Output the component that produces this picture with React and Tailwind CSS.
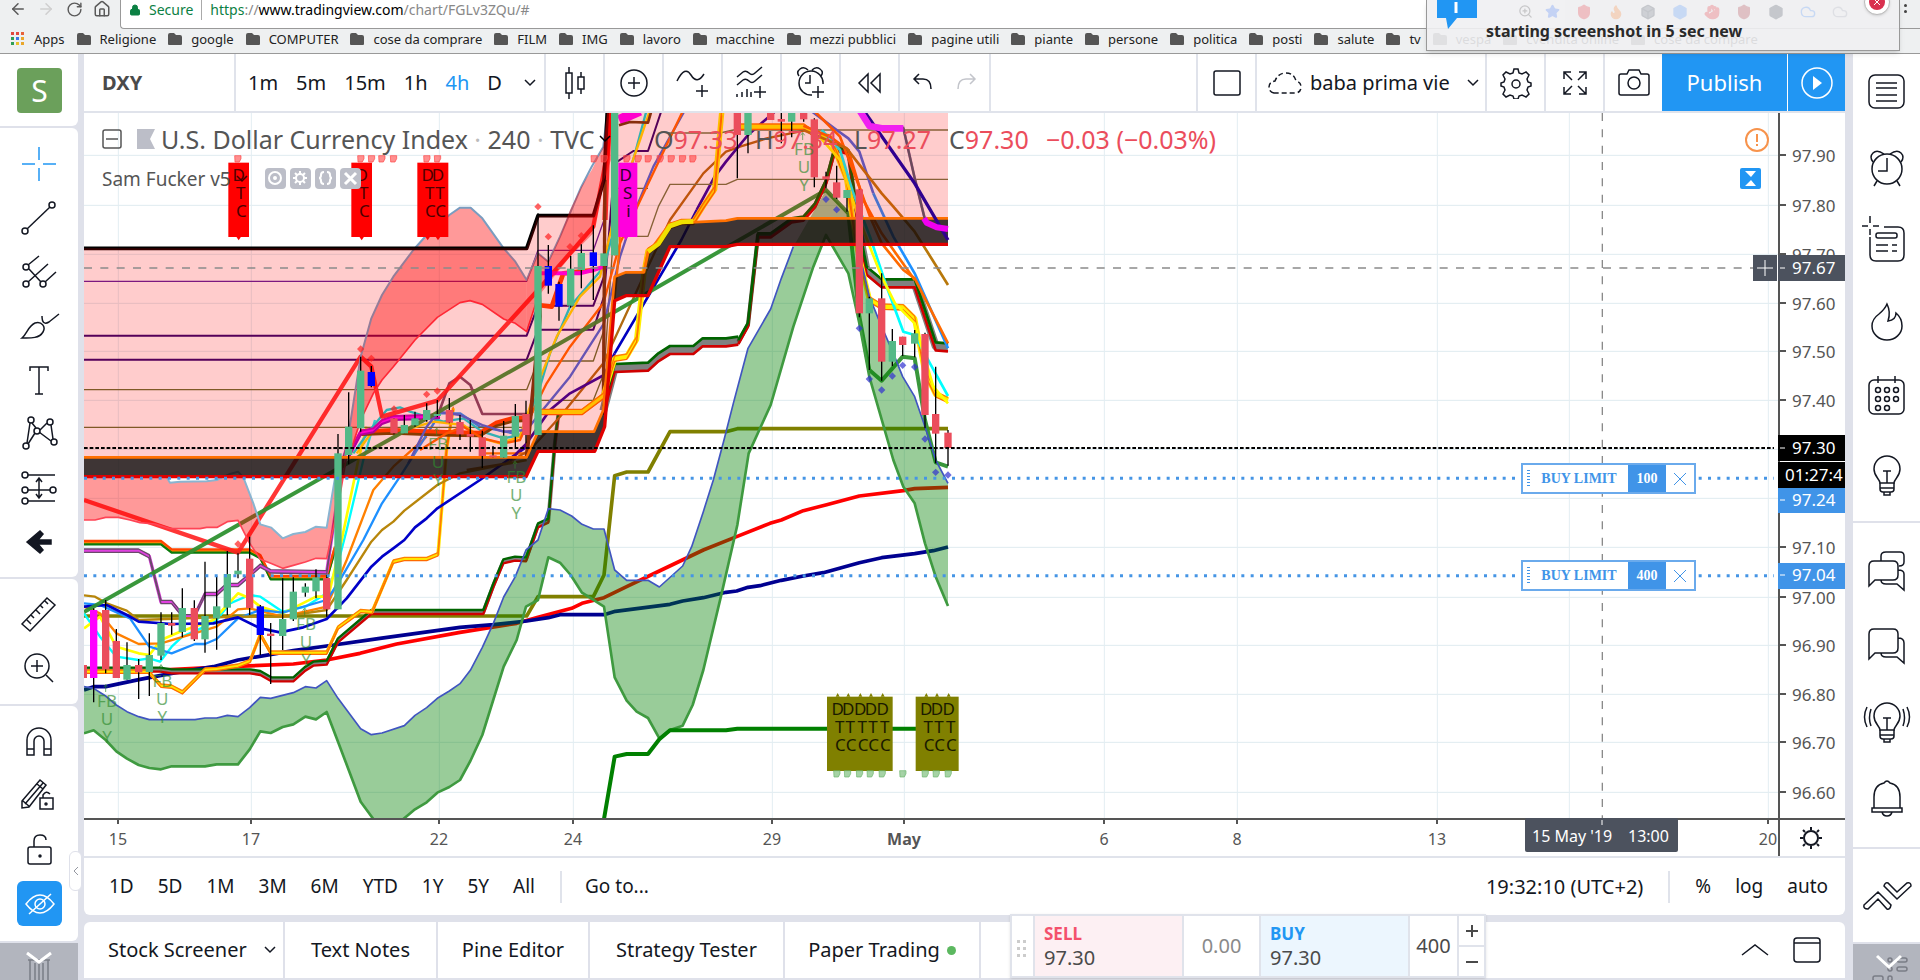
import React from "react";
import { ArrowLeft, ArrowRight, RotateCw, House, Lock, Star, ZoomIn, Flame, Shield, Box, Hand, Cloud } from "lucide-react";

const BOOKMARKS = [
  "Religione", "google", "COMPUTER", "cose da comprare", "FILM", "IMG", "lavoro", "macchine",
  "mezzi pubblici", "pagine utili", "piante", "persone", "politica", "posti", "salute", "tv",
  "vespa", "cvendita online", "cose da compare",
];

/* ---------- chart data, three units to the pixel ---------- */

const RED = "#eb4d5c";
const GREEN = "#53b987";
const BLUE = "#0000ff";

// [x, high, top, bottom, low, colour]
const CANDLES_LOW = [
  [10, 675, 675, 714, 714, RED], [41, 505, 510, 714, 787, "#ff00ff"], [77, 480, 510, 688, 700, RED],
  [109, 567, 603, 714, 714, RED], [141, 607, 675, 719, 719, GREEN], [176, 657, 675, 697, 777, RED],
  [208, 580, 645, 696, 768, GREEN], [243, 517, 549, 647, 660, GREEN], [275, 517, 549, 557, 584, RED],
  [307, 445, 504, 576, 592, GREEN], [343, 481, 504, 598, 603, RED], [375, 365, 528, 598, 638, GREEN],
  [410, 408, 499, 535, 629, GREEN], [442, 333, 402, 503, 525, GREEN], [474, 340, 392, 403, 415, GREEN],
  [509, 290, 356, 504, 525, RED], [541, 495, 499, 585, 645, BLUE], [572, 549, 581, 588, 732, RED],
  [608, 415, 537, 588, 630, GREEN], [640, 412, 455, 538, 543, GREEN], [676, 430, 440, 458, 470, GREEN],
  [708, 388, 412, 454, 475, GREEN], [740, 405, 414, 508, 530, RED], [774, -18, 40, 508, 508, GREEN],
];
const CANDLES_MID = [
  [806, 847, 950, 1035, 1063, GREEN], [842, 740, 782, 955, 965, GREEN], [874, 768, 786, 828, 832, BLUE],
  [942, 925, 925, 970, 973, RED], [973, 915, 945, 970, 970, GREEN], [1005, 905, 925, 946, 950, GREEN],
  [1040, 880, 900, 930, 935, GREEN], [1072, 870, 912, 918, 922, GREEN], [1108, 864, 900, 938, 940, RED],
  [1140, 915, 936, 973, 990, RED], [1171, 930, 972, 980, 1025, RED], [1207, 962, 982, 1038, 1074, RED],
  [1239, 1008, 1036, 1042, 1042, RED], [1271, 933, 977, 1043, 1043, GREEN], [1306, 882, 918, 980, 1012, GREEN],
  [1338, 872, 912, 975, 1000, RED], [1374, 310, 468, 975, 975, GREEN], [1405, 405, 468, 527, 551, BLUE],
];
const CANDLES_HIGH = [
  [117, 515, 522, 590, 632, BLUE], [152, 438, 476, 587, 593, GREEN], [184, 403, 429, 480, 535, GREEN],
  [220, 346, 427, 468, 570, BLUE], [252, 430, 430, 468, 468, GREEN], [284, 0, 0, 436, 436, GREEN],
  [652, 0, 0, 75, 205, RED], [684, 0, 0, 75, 130, GREEN], [752, 0, 0, 30, 30, RED], [784, 5, 27, 35, 100, RED],
  [815, 0, 0, 35, 82, GREEN], [851, 0, 0, 28, 35, RED], [883, 25, 28, 202, 232, RED], [918, 185, 199, 208, 235, RED],
  [950, 167, 217, 263, 267, RED], [981, 240, 240, 264, 305, GREEN], [1018, 238, 238, 610, 622, RED],
  [1048, 560, 565, 610, 780, GREEN], [1085, 490, 565, 755, 812, RED], [1117, 657, 693, 755, 768, GREEN],
  [1148, 680, 680, 705, 738, RED], [1184, 660, 670, 701, 742, GREEN], [1215, 668, 672, 915, 955, RED],
  [1247, 770, 912, 971, 1060, RED], [1284, 960, 968, 1014, 1067, RED],
];

const GRID_Y = [155, 205, 254, 303, 351, 400, 449, 498, 547, 597, 645, 694, 742, 792];
const GRID_X = [118, 251, 439, 573, 772, 904, 1104, 1237, 1437, 1569, 1768];

const PRICES = [
  [155, "97.90"], [205, "97.80"], [254, "97.70"], [303, "97.60"], [351, "97.50"], [400, "97.40"],
  [547, "97.10"], [597, "97.00"], [645, "96.90"], [694, "96.80"], [742, "96.70"], [792, "96.60"],
];
const DATES = [
  [118, "15"], [251, "17"], [439, "22"], [573, "24"], [772, "29"], [904, "May"],
  [1104, "6"], [1237, "8"], [1437, "13"], [1768, "20"],
];

// frames the series are plotted in
const LOW = "translate(-12 981)";
const MID = "translate(-12 -9)";
const HIGH = "translate(1308 -9)";
const DEEP = "translate(1308 981)";

function Line({ p, c, w = 7, o = 1 }) {
  return <polyline points={p} fill="none" stroke={c} strokeWidth={w} opacity={o} strokeLinejoin="round" />;
}

function Ribbon({ p, top, mid, low, gap = 10, w = 6 }) {
  return (
    <g>
      <g transform={`translate(0 ${gap / 2})`}><Line p={p} c={mid} w={gap} /></g>
      <g transform={`translate(0 ${gap})`}><Line p={p} c={low} w={w} /></g>
      <Line p={p} c={top} w={w} />
    </g>
  );
}

function Candles({ data }) {
  return data.map(([x, high, top, bottom, low, c]) => (
    <g key={x}>
      <line x1={x} x2={x} y1={high} y2={low} stroke="#000" strokeWidth="4" />
      <rect x={x - 11} y={top} width="22" height={bottom - top} fill={c} />
    </g>
  ));
}

function Diamonds({ at, c }) {
  return at.map(([x, y]) => (
    <path key={`${x}-${y}`} d={`M${x} ${y - 11}l11 11l-11 11l-11 -11z`} fill={c} opacity=".7" />
  ));
}

function Thumbs({ xs, y, c }) {
  return xs.map((x) => (
    <path key={x} d={`M${x - 9} ${y - 9}h19v9l-5 10h-13z`} fill={c} fillOpacity=".6" stroke={c} strokeWidth="2" />
  ));
}

function Tag({ x, w, fill, ink, cols, rows, up }) {
  const y0 = up ? 770 : 158;
  return (
    <g>
      <rect x={x} y={y0} width={w} height="223" fill={fill} />
      {cols.map((cx) => (
        <path key={cx} d={up ? `M${cx - 6} ${y0}l6 -11l6 11z` : `M${cx - 7} ${y0 + 222}l7 11l7 -11z`} fill={fill} />
      ))}
      {cols.map((cx) => rows.map((ch, i) => (
        <text key={`${cx}-${i}`} x={cx + [0, 6, 8][i]} y={y0 + 54 + i * 54} fill={ink} fontSize="51" textAnchor="middle">{ch}</text>
      )))}
    </g>
  );
}

function Fbuy({ x, y }) {
  return (
    <g fill="#2e8b2e" opacity=".65" fontSize="51" textAnchor="middle">
      <path d={`M${x - 4} ${y - 44}v-22m-6 8l6 -8l6 8`} fill="none" stroke="#2e8b2e" strokeWidth="3" />
      <text x={x} y={y}>FB</text>
      <text x={x} y={y + 54}>U</text>
      <text x={x} y={y + 108}>Y</text>
    </g>
  );
}

const KUMO_TOP = "-1308,1042 20,1042 54,965 222,965 250,900 284,500 318,487 372,487 384,430 450,340 618,332 652,325 1284,325";
const KUMO_LOW = "-1308,1100 18,1100 54,1024 224,1024 254,950 284,572 318,557 384,557 450,410 618,410 652,403 1284,403";
const KUMO_LOW_BACK = "1284,403 652,403 618,410 450,410 384,557 318,557 284,572 254,950 224,1024 54,1024 18,1100 -1308,1100";

function Plot() {
  return (
    <svg className="block h-full w-full" viewBox="0 0 5082 2118" preserveAspectRatio="xMinYMin slice" fontFamily="Noto Sans, sans-serif">
      {GRID_Y.map((y) => <path key={y} d={`M0 ${(y - 113) * 3 + 1}H5082`} stroke="#dfebf0" strokeWidth="3" />)}
      {GRID_X.map((x) => <path key={x} d={`M${(x - 84) * 3 + 1} 0V2118`} stroke="#e3edf2" strokeWidth="3" />)}

      {/* moving averages and channels */}
      <g transform={LOW}>
        <Line c="#808000" w={11} p="12,528 1340,528 1374,470 1540,470 1572,405 1604,107 1640,96 1704,96 1770,-25 1938,-25 1972,-34 2604,-34" />
        <Line c="#ff0000" w={11} p="12,693 240,690 450,680 640,672 740,660 840,640 950,612 1140,577 1310,550 1374,532 1475,505 1506,490 1572,473 1640,440 1738,393 1870,330 1970,290 2070,250 2104,240 2170,212 2240,194 2338,168 2470,152 2504,146 2604,142" />
        <Line c="#000090" w={11} p="12,750 41,740 77,740 180,718 275,700 400,680 474,660 640,632 740,618 900,595 1140,562 1240,554 1340,543 1405,533 1440,524 1572,524 1606,514 1770,493 1808,483 1870,473 1938,457 1970,453 2004,442 2040,437 2104,421 2170,408 2230,398 2338,368 2405,353 2504,341 2560,332 2604,321" />
        <Ribbon top="#ff4500" mid="#ff8c00" low="#0a7a0a" gap={10} w={7} p="12,303 243,303 275,328 509,328 541,345 572,408 740,408 765,320" />
        <Ribbon top="#6b4a6b" mid="#e040e0" low="#6b4a6b" gap={10} w={4} p="12,327 176,327 208,344 243,481 275,481 310,524 343,524 375,457 410,457 440,430 474,430 509,400 541,372 572,389 740,392 790,50 806,0" />
        <Ribbon top="#006400" mid="#808080" low="#d00000" gap={12} w={7} p="12,683 240,683 275,688 510,688 541,693 574,712 640,712 676,680 700,665 740,662 774,595 874,510 1210,510 1240,430 1270,358 1305,350 1338,352 1374,250 1405,236 1425,0 1436,-90" />
        <Ribbon top="#ff8000" mid="#ffe600" low="#ff6a00" gap={10} w={4} p="12,690 205,690 243,732 275,735 307,752 375,684 410,682 474,672 510,658 541,578 572,633 740,633 774,558 842,508 876,511 906,440 940,360 973,352 1040,352 1074,338 1100,20 1120,-100" />
        <Line c="#00ffff" p="12,520 60,590 109,650 176,660 208,655 240,665 275,620 307,590 375,560 410,540 450,490 509,465 541,470 608,515 676,500 708,480 740,460 774,370 800,270 850,60 885,-60" />
        <Line c="#ffff00" w={8} p="12,565 60,530 109,620 176,640 208,645 243,600 300,575 400,540 474,460 509,475 541,500 608,520 708,470 745,470 785,300 835,60 860,-40" />
        <Line c="#ff8000" p="12,500 60,520 109,580 176,612 243,610 343,580 410,560 474,508 509,505 608,530 740,500 800,360 880,150 940,80 1040,-10" />
        <Line c="#1e90ff" p="12,490 60,495 150,535 208,620 275,640 345,612 375,612 410,597 474,535 541,510 608,518 740,480 774,430 850,300 906,190 960,110 1030,0 1080,-80 1140,-80 1200,-40 1300,-20" />
        <Line c="#b8860b" p="12,466 45,470 80,490 140,512 176,540 474,530 608,530 740,510 800,420 874,305 906,270 940,245 973,212 1072,135 1140,100 1340,60" />
        <Line c="#0000c8" w={8} p="12,500 80,495 141,525 176,545 275,552 400,550 474,532 541,565 600,577 670,562 740,537 800,475 874,380 906,350 940,325 973,300 1005,262 1040,235 1072,205 1200,120 1340,20" />
      </g>

      <g transform={MID}>
        <Line c="#5a1fa0" w={4} p="12,514 1340,514 1374,421 1540,421 1572,330" />
        <Line c="#2a0070" w={6} p="12,677 1340,677 1374,587 1540,587 1572,500" />
        <Line c="#2a0070" w={6} p="12,749 1340,749 1374,659 1540,659 1572,560 1604,160 1660,123 1704,123 1745,0" />
        <Line c="#5f7030" w={4} p="12,839 1340,839 1374,753 1540,753 1572,660" />
        <Line c="#5f7030" w={4} p="12,952 1340,952 1374,871 1540,871 1572,790 1610,235 1704,235" />
        <Line c="#00dde0" p="820,1030 870,960 920,900 960,892 990,905 1040,920 1090,935 1150,925 1207,965 1271,985 1320,975 1374,850 1410,730 1470,590 1572,470 1620,290 1665,130 1700,0" />
        <Line c="#ffe000" p="830,1030 880,960 960,965 1060,935 1150,945 1207,985 1260,1000 1320,980 1370,830 1430,680 1500,560 1560,500 1610,290 1680,90 1710,0" />
        <Ribbon top="#ff4500" mid="#ff4500" low="#6b4a00" gap={12} w={8} p="842,962 940,958 1100,964 1200,966 1250,935 1300,922 1340,920" />
        <Ribbon top="#c000c0" mid="#ff00ff" low="#a000c0" gap={12} w={6} p="806,1030 842,962 880,955 906,930 940,918 1040,915 1080,912" />
        <Line c="#7a4a6b" w={8} p="1075,912 1108,820 1140,800 1171,825 1207,912 1340,912" />
        <Line c="#4169e1" p="985,1060 1040,950 1075,905 1140,915 1207,945 1271,965 1340,960 1380,910 1470,800 1572,640 1620,440 1670,290 1720,170 1815,0" />
        <Line c="#ff6a00" p="1020,1020 1100,970 1150,950 1207,985 1271,1000 1320,990 1360,900 1400,820 1470,710 1570,580 1620,400 1700,230 1810,0" />
        <Line c="#ff8000" p="1207,1030 1340,1030" />
        <Line c="#b06a10" p="1160,1080 1280,1060 1350,1020 1440,920 1570,760 1690,500 1770,330 1870,190 1938,125 1980,110 2060,85 2172,62" />
        <Line c="#2a00a0" w={8} p="1290,1050 1340,1000 1410,900 1470,850 1572,795 1604,730" />
        <Line c="#0000c0" w={8} p="1604,730 1804,390 1850,300" />
        <Line c="#2a00a0" w={8} p="1850,300 1904,200 1938,155 2004,75 2090,0" />
        <Line c="#ff2020" w={13} o={0.9} p="12,1170 474,1328 842,740 874,770 906,920 1072,872 1374,540 1540,350 1582,130 1592,0" />
        <Line c="#2e9130" w={12} o={0.95} p="12,1506 1440,700 2238,240 2305,310 2338,620 2368,780 2405,812 2468,740 2504,745 2535,930 2567,1057 2604,1070" />
      </g>

      <g transform={HIGH}>
        <Line c="#ff0000" w={16} p="255,330 262,130 270,0" o={0.8} />
        <Line c="#ff4500" w={14} p="54,585 95,590 130,490 220,480" />
        <Line c="#ff00ff" w={12} p="54,490 180,490 220,480 252,470" />
        <Line c="#ff00ff" w={30} p="297,30 360,2" />
        <Line c="#6b3a10" w={8} p="297,46 330,36 384,38 395,0" />
        <Line c="#6b3a10" w={12} p="20,1042 60,620 54,480" />
        <Line c="#6b3a10" w={10} p="250,900 255,210" />
        <Line c="#ff8000" p="254,900 284,560 300,400 290,200" />
        <Line c="#6b7a45" w={4} p="350,379 384,379 415,290 450,223 618,223 652,208 1284,208" />
        <Line c="#6b7a45" w={4} p="440,69 600,69 640,60 1284,60" />
        <Ribbon top="#006400" mid="#808080" low="#d00000" gap={24} w={8} p="250,890 284,762 384,758 415,730 450,708 520,708 548,685 618,685 655,680" />
        <Ribbon top="#006400" mid="#4a4a30" low="#d00000" gap={12} w={8} p="655,690 684,638 714,370 752,370 815,325 850,320 885,280 918,210 945,110 985,120 1018,360" />
        <Ribbon top="#006400" mid="#808080" low="#d00000" gap={24} w={8} p="1018,360 1040,470 1085,508 1184,508 1215,600 1247,697 1284,700" />
        <Ribbon top="#ff8000" mid="#ffee00" low="#ff6a00" gap={16} w={4} p="60,898 186,898 250,850 284,738 320,732 350,680 372,480 384,415 415,395 450,340 484,328 520,328 550,280 584,230 605,0" />
        <Ribbon top="#ff8000" mid="#ffee00" low="#ff6a00" gap={16} w={4} p="660,42 852,42 885,66 930,75 980,200 1010,400 1048,560 1085,582 1150,584 1184,618 1215,780 1247,845 1284,862" />
        <Line c="#00ffff" w={8} p="905,60 960,120 1000,250 1050,380 1100,530 1150,665 1184,675 1230,760 1284,858" />
        <Line c="#ffff00" w={8} p="890,70 960,150 1018,330 1085,500 1125,580 1184,640 1240,830 1284,880" />
        <Line c="#4169e1" w={8} p="870,0 950,60 985,85 1018,125 1060,250" />
        <Line c="#1e90ff" w={8} p="1060,250 1120,380 1184,490 1284,715" />
        <Line c="#ff6a00" w={8} p="880,0 960,80 1018,230 1050,320 1085,400 1150,480 1184,505 1284,700" />
        <Line c="#ff6a00" w={8} p="850,47 930,80 985,120 1030,270 1085,370 1184,510" />
        <Line c="#b8780b" w={8} p="850,60 980,115 1085,250 1120,290 1184,365 1250,470 1284,525" />
      </g>

      {/* clouds lie over the lines */}
      <g transform={LOW} fill="#008000">
        <polygon fillOpacity=".4" points="12,740 41,745 77,768 109,795 141,815 176,830 208,839 345,839 375,834 410,834 442,826 474,830 509,803 541,772 572,775 640,758 676,740 708,744 740,722 774,775 842,866 874,884 906,879 973,857 1005,826 1040,803 1072,775 1108,753 1140,731 1171,691 1207,622 1240,550 1271,471 1306,410 1338,330 1374,300 1405,206 1440,210 1475,228 1506,253 1540,267 1572,267 1604,390 1640,421 1704,421 1738,441 1808,378 1835,320 1870,215 1900,120 1932,0 1960,-110 2004,-275 2072,-393 2104,-485 2140,-580 2238,-750 2305,-680 2338,-560 2368,-430 2405,-340 2440,-260 2468,-190 2504,-130 2535,-40 2567,60 2604,130 2604,498 2567,410 2535,310 2504,190 2470,140 2440,60 2368,-190 2338,-350 2305,-500 2238,-615 2200,-520 2140,-340 2072,-105 2006,40 1972,255 1925,460 1870,690 1838,795 1808,857 1770,870 1738,895 1704,834 1670,815 1640,782 1604,712 1572,500 1506,458 1472,405 1440,368 1405,352 1374,480 1338,500 1310,600 1271,680 1207,885 1171,963 1140,1020 1108,1041 1072,1058 1040,1087 1005,1108 970,1137 880,1137 842,1085 774,905 740,816 708,838 676,830 640,853 608,861 572,879 541,874 509,928 474,973 410,973 375,979 275,979 243,988 208,984 176,975 141,956 109,934 77,900 41,871 12,880" />
        <Line c="#4055c0" w={5} p="12,740 41,745 77,768 109,795 141,815 176,830 208,839 345,839 375,834 410,834 442,826 474,830 509,803 541,772 572,775 640,758 676,740 708,744 740,722 774,775 842,866 874,884 906,879 973,857 1005,826 1040,803 1072,775 1108,753 1140,731 1171,691 1207,622 1240,550 1271,471 1306,410 1338,330 1374,300 1405,206 1440,210 1475,228 1506,253 1540,267 1572,267 1604,390 1640,421 1704,421 1738,441 1808,378 1835,320 1870,215 1900,120 1932,0 1960,-110 2004,-275 2072,-393 2104,-485 2140,-580" />
        <Line c="#4055c0" w={5} p="2338,-560 2368,-430 2405,-340 2440,-260 2468,-190 2504,-130 2535,-40 2567,60 2604,130" />
        <Line c="#3f9a40" w={8} p="12,880 41,871 77,900 109,934 141,956 176,975 208,984 243,988 275,979 375,979 410,973 474,973 509,928 541,874 572,879 608,861 640,853 676,830 708,838 740,816 774,905 842,1085 880,1137" />
        <Line c="#3f9a40" w={8} p="970,1137 1005,1108 1040,1087 1072,1058 1108,1041 1140,1020 1171,963 1207,885 1271,680 1310,600 1338,500 1374,480 1405,352 1440,368 1472,405 1506,458 1572,500 1604,712 1640,782 1670,815 1704,834 1738,895 1770,870 1808,857 1838,795 1870,690 1925,460 1972,255 2006,40 2072,-105 2140,-340 2200,-520 2238,-615 2305,-500 2338,-350 2368,-190 2440,60 2470,140 2504,190 2535,310 2567,410 2604,498" />
        <polygon fill="#ff0000" fillOpacity=".4" points="12,110 260,110 270,128 300,125 380,124 410,120 450,110 490,112 520,190 541,253 574,263 608,295 640,282 676,276 708,260 740,263 774,60 800,50 774,200 740,356 708,355 676,366 640,376 608,385 572,370 541,358 509,310 474,241 442,245 412,262 380,262 360,266 270,266 225,252 180,248 150,240 115,232 77,232 45,240 12,240" />
        <Line c="#8ab4d0" w={6} p="260,112 270,128 300,125 380,124 410,120 450,102 474,95 490,112 520,190 541,253 574,263 608,295 640,282 676,276 708,260 740,263 774,60" />
        <Line c="#ff4455" w={5} p="12,240 45,240 77,232 115,232 150,240 180,248 225,252 270,266 360,266 380,262 412,262 442,245 474,241 509,310 541,358 572,370 608,385 640,376 676,366 708,355 740,356 774,200 800,50" />
      </g>
      <g transform={MID}>
        <polygon fill="#ff0000" fillOpacity=".4" points="795,1040 842,740 874,625 906,555 940,500 1000,420 1040,375 1108,315 1140,293 1172,293 1207,325 1271,415 1306,455 1340,510 1340,665 1306,640 1271,627 1207,583 1170,572 1140,578 1072,622 1005,690 940,770 906,810 880,850 842,930 810,1030" />
        <Line c="#7a9dc0" w={6} p="795,1040 842,740 874,625 906,555 940,500 1000,420 1040,375 1108,315 1140,293 1172,293 1207,325 1271,415 1306,455 1340,510 1374,430 1405,455 1440,380 1504,230 1535,170 1570,110 1582,0" />
        <Line c="#ff3344" w={5} p="810,1030 842,930 880,850 906,810 940,770 1005,690 1072,622 1140,578 1170,572 1207,583 1271,627 1306,640 1340,665 1374,560" />
        <Line c="#000" w={11} p="12,415 1340,415 1374,317 1540,317 1572,210 1582,0" />
      </g>
      <g transform={HIGH}>
        <polygon fill="#ff0000" fillOpacity=".4" points="20,510 54,430 86,455 120,380 150,300 184,230 215,180 250,110 262,0 290,0 280,130 252,210 220,370 150,440 54,560 20,665" />
        <polygon fill="#ff0000" fillOpacity=".2" points="-1308,415 20,415 54,317 220,317 252,210 262,0 1284,0 1284,325 652,325 618,332 450,340 384,430 372,487 318,487 284,500 250,900 222,965 54,965 20,1042 -1308,1042" />
        <polygon fill="#140808" fillOpacity=".82" points={`${KUMO_TOP} ${KUMO_LOW_BACK}`} />
        <Line c="#ff7000" w={8} p={KUMO_TOP} />
        <Line c="#e00000" w={10} p={KUMO_LOW} />
        <Line c="#f0e000" w={14} p="384,425 415,402 450,348 484,336 520,334" />
        <Ribbon top="#6b4a5b" mid="#b05a8b" low="#6b4a5b" gap={8} w={5} p="1150,50 1184,200 1215,325" />
        <Line c="#300090" w={10} p="1030,0 1184,220 1284,390" />
        <Line c="#f020f0" w={20} p="1018,0 1048,48 1085,55 1150,55" />
        <Line c="#f000f0" w={18} p="1212,325 1220,338 1250,352 1284,357" />
      </g>

      <g transform={DEEP}>
        <Line c="#008000" w={12} p="252,1137 284,950 320,942 384,942 418,898 450,871 618,871 652,866 1200,866" />
      </g>

      {/* candles */}
      <g transform={LOW}><Candles data={CANDLES_LOW} /></g>
      <g transform={MID}><Candles data={CANDLES_MID} /></g>
      <g transform={HIGH}><Candles data={CANDLES_HIGH} /></g>

      {/* signals */}
      <g transform={LOW}>
        <Fbuy x={81} y={800} />
        <Fbuy x={247} y={740} />
        <Fbuy x={678} y={570} />
        <Fbuy x={1074} y={30} />
        <Fbuy x={1309} y={130} />
        <Diamonds c="#ff2020" at={[[474, 312]]} />
      </g>
      <g transform={MID}>
        <Thumbs c="#f44" y={146} xs={[473, 842, 874, 905, 940, 1040, 1072]} />
        <Tag x={445} w={62} fill="#ff0000" ink="#4d0000" cols={[476]} rows={["D", "T", "C"]} />
        <Tag x={814} w={62} fill="#ff0000" ink="#4d0000" cols={[845]} rows={["D", "T", "C"]} />
        <Tag x={1012} w={93} fill="#ff0000" ink="#4d0000" cols={[1043, 1074]} rows={["D", "T", "C"]} />
        <Diamonds c="#ff2020" at={[[1374, 290], [1405, 380], [842, 717], [874, 745], [1040, 853], [1072, 843], [942, 897]]} />
      </g>
      <g transform={HIGH}>
        <Thumbs c="#f44" y={146} xs={[222, 252, 320, 354, 384, 420, 453, 487, 518]} />
        <Tag x={295} w={57} fill="#ff00dd" ink="#33002b" cols={[317]} rows={["D", "S", "i"]} />
        <Fbuy x={852} y={134} />
        <Diamonds c="#ff2020" at={[[150, 410], [184, 377]]} />
        <Diamonds c="#3030d0" at={[[918, 268], [950, 299], [1018, 655], [1048, 807], [1085, 840], [1117, 798], [1148, 766], [1184, 771], [1215, 987], [1247, 1087], [1284, 1095]]} />
      </g>
      <g transform={DEEP}>
        <Tag up x={921} w={197} fill="#808000" ink="#1a1a00" cols={[953, 985, 1021, 1053, 1088]} rows={["D", "T", "C"]} />
        <Tag up x={1187} w={129} fill="#808000" ink="#1a1a00" cols={[1219, 1251, 1286]} rows={["D", "T", "C"]} />
        <Thumbs c="#6ab56a" y={1001} xs={[950, 982, 1018, 1050, 1086, 1148, 1215, 1248, 1284]} />
      </g>

      {/* price lines and crosshair */}
      <path d="M0 1005H5070" stroke="#000" strokeWidth="6" strokeDasharray="11 6" />
      <path d="M0 1096H5070M0 1388H5070" stroke="#4595e5" strokeWidth="9" strokeDasharray="9 19" />
      <path d="M0 465H5070M4555 0V2118" stroke="#8a8a8a" strokeWidth="4" strokeDasharray="24 25" />
    </svg>
  );
}

function PriceAxis() {
  return (
    <svg className="block h-full w-[67px] shrink-0" viewBox="1778 113 67 706" preserveAspectRatio="xMinYMin slice" fontFamily="Noto Sans, sans-serif" fontSize="17">
      <path d="M1779 113V819" stroke="#555" strokeWidth="2" />
      {PRICES.map(([y, t]) => (
        <g key={t}>
          <path d={`M1779 ${y}h7`} stroke="#555" strokeWidth="2" />
          <text x="1792" y={y + 7} fill="#555">{t}</text>
        </g>
      ))}
      <rect x="1778" y="255" width="67" height="26" fill="#4c525e" />
      <rect x="1778" y="435" width="67" height="26" fill="#000" />
      <rect x="1778" y="462" width="67" height="26" fill="#000" />
      <rect x="1778" y="488" width="67" height="25" fill="#4094e8" />
      <rect x="1778" y="563" width="67" height="26" fill="#4094e8" />
      <path d="M1780 268h5M1780 448h5M1780 500h5M1780 575h5" stroke="#fff" strokeWidth="1" />
      <g fill="#fff">
        <text x="1792" y="274">97.67</text>
        <text x="1792" y="454">97.30</text>
        <text x="1785" y="481">01:27:4</text>
        <text x="1792" y="506">97.24</text>
        <text x="1792" y="581">97.04</text>
      </g>
    </svg>
  );
}

function TimeAxis() {
  return (
    <svg className="block h-[38px] w-full shrink-0" viewBox="84 819 1761 38" preserveAspectRatio="xMinYMin slice" fontFamily="Noto Sans, sans-serif" fontSize="16">
      <path d="M84 820H1845" stroke="#555" strokeWidth="2" />
      <path d="M1779 819V857" stroke="#555" strokeWidth="2" />
      {DATES.map(([x, t]) => (
        <g key={t}>
          <path d={`M${x} 819v6`} stroke="#555" strokeWidth="2" />
          <text x={x} y="846" fill="#555" textAnchor="middle" fontWeight={t === "May" ? 700 : 400}>{t}</text>
        </g>
      ))}
      <rect x="1525" y="819" width="153" height="34" rx="2" fill="#4c525e" />
      <path d="M1602 821v5" stroke="#fff" />
      <text x="1532" y="843" fill="#fff">15 May &#39;19</text>
      <text x="1628" y="843" fill="#fff">13:00</text>
      <g fill="none" stroke="#131722" strokeWidth="2">
        <circle cx="1811" cy="839" r="7" />
        <path d="M1811 828v3M1811 847v3M1800 839h3M1819 839h3M1803 831l2 2M1817 845l2 2M1803 847l2 -2M1817 833l2 -2" />
      </g>
    </svg>
  );
}

/* ---------- icons ---------- */

function Ico({ children, w = 44, h = 44, sw = 1.5, className = "" }) {
  return (
    <svg width={w} height={h} viewBox={`0 0 ${w} ${h}`} fill="none" stroke="currentColor" strokeWidth={sw} className={`shrink-0 ${className}`}>
      {children}
    </svg>
  );
}

const bulb = (
  <>
    <path d="M16 27c0 -4 -6 -6 -6 -14a13 13 0 0 1 26 0c0 8 -6 10 -6 14z" />
    <path d="M16 27v6q0 3 3 3h8q3 0 3 -3v-6M16 32h14M20 36v3h6v-3M19 15h8M23 15v12" />
  </>
);

const LEFT_TOOLS = [
  ["Cross", <path key="a" stroke="#2196f3" d="M22 5v13M22 26v13M5 22h13M26 22h13" />],
  ["Trend Line", <g key="a"><circle cx="8" cy="35" r="3" /><circle cx="35" cy="9" r="3" /><path d="M10 33L33 11" /></g>],
  ["Pitchfork", <g key="a"><circle cx="9" cy="17" r="3" /><circle cx="9" cy="34" r="3" /><circle cx="26" cy="34" r="3" /><path d="M11 15L22 6M11 32L31 14M12 19L24 32M28 32L39 22" /></g>],
  ["Brush", <g key="a"><path d="M5 34c5 -4 6 -12 13 -15c7 -2 11 4 8 9c-4 7 -14 6 -21 6zM25 12q0 10 7 6l10 -8" /></g>],
  ["Text", <path key="a" d="M13 13v-4h18v4M22 9v27M18 36h8" />],
  ["Patterns", <g key="a"><circle cx="14" cy="8" r="3" /><circle cx="33" cy="10" r="3" /><circle cx="9" cy="34" r="3" /><circle cx="37" cy="30" r="3" /><circle cx="20" cy="19" r="3" /><path d="M13 11L10 31M15 11L19 16M23 18L30 11M22 20L34 29M34 13L36 27M18 21L11 32" /></g>],
  ["Prediction", <g key="a"><circle cx="8" cy="9" r="3" /><circle cx="8" cy="24" r="3" /><circle cx="36" cy="24" r="3" /><circle cx="8" cy="35" r="3" /><path d="M11 9h27M11 24h22M11 35h27M22 13v18M19 16l3 -4l3 4M19 28l3 4l3 -4" /></g>],
  ["Arrow", <path key="a" fill="currentColor" d="M10 22l13 -11l3 3l-5 6h13v4h-13l5 6l-3 3z" />],
];

const MEASURE_TOOLS = [
  ["Measure", <path key="a" d="M5 32L30 6l8 7L13 39zM10 28l4 4M14 23l3 3M19 18l4 4M23 13l3 3M28 9l3 3" />],
  ["Zoom In", <g key="a"><circle cx="20" cy="20" r="12" /><path d="M29 29l7 7M20 14v12M14 20h12" /></g>],
];

const LOCK_TOOLS = [
  ["Magnet", <path key="a" d="M10 36v-15a12 12 0 0 1 24 0v15h-7v-14a5 5 0 0 0 -10 0v14zM10 30h7M27 30h7" />],
  ["Stay in Drawing Mode", <g key="a"><path d="M5 28L23 7l6 5L12 34l-7 1zM6 28l7 6M8 31L26 10M20 11l6 5" /><path d="M23 25h13v11h-13zM26 25v-3q3 -5 7 -1" /><circle cx="29" cy="31" r="1" /></g>],
  ["Lock All Drawings", <g key="a"><rect x="11" y="20" width="23" height="17" rx="2" /><path d="M17 20v-6q0 -6 6 -6t6 5" /><circle cx="23" cy="29" r="1" fill="currentColor" /></g>],
];

const RIGHT_TOP = [
  ["Watchlist", <g key="a"><rect x="5" y="5" width="35" height="33" rx="6" /><path d="M12 13h21M12 18h21M12 25h21M12 31h21" /></g>],
  ["Alerts", <g key="a"><circle cx="23" cy="23" r="15" /><path d="M9 16q-4 -5 0 -9t11 1M37 16q4 -5 0 -9t-11 1M13 35l-3 5M33 35l3 5M23 12v13h-9" /></g>],
  ["Data Window", <g key="a"><path d="M6 15v18q0 6 6 6h22q6 0 6 -6v-22q0 -6 -6 -6h-14" /><rect x="12" y="11" width="21" height="5" rx="2" /><path d="M12 23h12M28 23h5M12 29h12M28 29h5M6 -6v7M6 7v6M-2 4h6M9 4h6" /></g>],
  ["Hotlist", <path key="a" d="M23 6q-2 5 -8 10q-7 5 -7 12a15 14 0 0 0 30 0q0 -8 -6 -13q0 7 -8 8q3 -9 -1 -17z" />],
  ["Calendar", <g key="a"><rect x="5" y="6" width="35" height="34" rx="5" /><path d="M14 2v7M31 2v7" />{[[14, 16], [23, 16], [32, 16], [14, 25], [23, 25], [32, 25], [14, 34], [23, 34]].map(([x, y]) => <circle key={`${x}-${y}`} cx={x} cy={y} r="2.5" />)}</g>],
  ["My Ideas", <g key="a" transform="translate(0 6)">{bulb}</g>],
];

const RIGHT_MID = [
  ["Public Chats", <g key="a"><path d="M5 37v-20q0 -5 5 -5h19q5 0 5 5v9q0 5 -5 5h-18zM17 12v-5q0 -4 5 -4h14q4 0 4 4v6q0 4 -5 4M34 21q6 0 6 4v16l-7 -6h-11q-5 0 -5 -4" /></g>],
  ["Private Chats", <path key="a" d="M5 34v-25q0 -5 5 -5h19q5 0 5 5v14q0 5 -5 5h-18zM34 13q6 0 6 5v20l-7 -6h-11q-5 0 -5 -4" />],
  ["Ideas Stream", <g key="a" transform="translate(0 2)">{bulb}<path d="M7 6q-3 9 0 17M3 4q-5 10 0 20M39 6q3 9 0 17M43 4q5 10 0 20" /></g>],
  ["Notifications", <path key="a" d="M10 31v-11q0 -12 10 -14q3 -4 6 0q10 2 10 14v11M8 31h30v4h-30zM18 35q1 4 5 4t5 -4" />],
];

function ToolButton({ label, children, className }) {
  return (
    <button aria-label={label} className={`flex w-full shrink-0 items-center justify-center ${className}`}>
      {children}
    </button>
  );
}

function Chevron({ className = "" }) {
  return <Ico w={12} h={8} className={className}><path d="M1 1l5 5l5 -5" /></Ico>;
}

/* ---------- page parts ---------- */

function BrowserBar() {
  return (
    <header className="relative shrink-0 border-b border-[#999] bg-[#eef0f1] text-[13px] text-[#222]">
      <div className="flex h-[29px] items-start">
        <div className="flex w-[120px] shrink-0 items-center justify-between px-[9px] text-[#5a5a5a]">
          <ArrowLeft size={18} />
          <ArrowRight size={18} className="text-[#cfcfcf]" />
          <RotateCw size={17} />
          <House size={18} />
        </div>
        <div className="flex h-[29px] flex-1 items-start rounded-bl border-b border-l border-[#999] bg-white pl-2 text-[14px] leading-5">
          <Lock size={12} className="mt-1 fill-[#0b8043] text-[#0b8043]" />
          <span className="ml-2 text-[#0b8043]">Secure</span>
          <span className="mx-2 h-5 w-px bg-[#aaa]" />
          <span className="text-[#888]">
            <span className="text-[#0b8043]">https</span>://<span className="text-black">www.tradingview.com</span>/chart/FGLv3ZQu/#
          </span>
        </div>
        <div className="h-[29px] w-[355px] border-b border-[#999]" />
      </div>
      <nav className="flex h-6 items-center gap-3 overflow-hidden whitespace-nowrap pb-1 pl-[11px] leading-5">
        <a href="#" className="flex items-center gap-[9px]">
          <svg width="14" height="14" viewBox="0 0 14 14">
            {["#e04a3f", "#e04a3f", "#e8623a", "#2f9e55", "#3b78e7", "#e9a72b", "#2f9e55", "#e9c02b", "#e9a72b"].map((c, i) => (
              <rect key={i} x={(i % 3) * 5} y={Math.floor(i / 3) * 5} width="3" height="3" fill={c} />
            ))}
          </svg>
          Apps
        </a>
        {BOOKMARKS.map((b) => (
          <a key={b} href="#" className="flex items-center gap-[9px]">
            <svg width="14" height="13" viewBox="0 0 14 13"><path d="M0 2q0 -2 2 -2h4l2 2h4q2 0 2 2v7q0 1 -1 1h-12q-1 0 -1 -1z" fill="#555" /></svg>
            {b}
          </a>
        ))}
      </nav>
      <span className="absolute right-[13px] top-0 flex flex-col gap-[3px] py-1">
        <i className="h-[3px] w-[3px] rounded-full bg-[#444]" /><i className="h-[3px] w-[3px] rounded-full bg-[#444]" />
      </span>
      <div className="absolute right-5 top-0 z-20 flex h-[51px] w-[474px] border border-t-0 border-[#999] bg-[#eff0f2]/90 shadow-md">
        <svg width="40" height="29" viewBox="0 0 40 29" className="ml-[10px]">
          <path d="M0 0h40v18h-20l-9 11l-2 -11h-9z" fill="#2196f3" />
          <path d="M19 2v11" stroke="#fff" strokeWidth="3" />
        </svg>
        <div className="absolute left-[91px] top-1 flex gap-[16px] opacity-20">
          <ZoomIn size={15} className="-mr-1" /><Star size={15} className="fill-blue-600 text-blue-600" />
          <Shield size={16} className="fill-red-600 text-red-600" />
          <Flame size={16} className="fill-orange-500 text-orange-500" />
          <Box size={16} className="fill-gray-600 text-gray-800" />
          <Box size={16} className="fill-blue-500 text-blue-500" />
          <Hand size={16} className="fill-red-600 text-red-600" />
          <Shield size={16} className="fill-red-800 text-red-800" />
          <Box size={16} className="fill-gray-800 text-gray-800" />
          <Cloud size={16} className="text-blue-500" />
          <Cloud size={16} className="text-gray-400" />
        </div>
        <span className="ml-[9px] mt-[19px] text-[16px] font-bold leading-6 text-[#2a2a2a]">starting screenshot in 5 sec new</span>
        <button aria-label="Close" className="absolute right-[9px] top-[-11px] flex h-[26px] w-[26px] items-center justify-center rounded-full border border-[#bbb] bg-white shadow">
          <svg width="18" height="18" viewBox="0 0 18 18"><circle cx="9" cy="9" r="8" fill="#d9304f" /><path d="M6 6l6 6M12 6l-6 6" stroke="#fff" /></svg>
        </button>
      </div>
    </header>
  );
}

function LeftToolbar() {
  return (
    <aside className="relative flex w-[78px] shrink-0 flex-col gap-[2px] bg-[#dfe1ea] text-[#131722]">
      <div className="h-[72px] shrink-0 rounded-br-md bg-white pl-[17px] pt-[14px]">
        <button className="flex h-[45px] w-[45px] items-center justify-center rounded bg-[#6ba05b] text-[30px] leading-8 text-white">S</button>
      </div>
      <div className="h-[449px] shrink-0 rounded-r-md bg-white pt-[9px]">
        {LEFT_TOOLS.map(([label, icon]) => (
          <ToolButton key={label} label={label} className="h-[54px]"><Ico>{icon}</Ico></ToolButton>
        ))}
      </div>
      <div className="h-[125px] shrink-0 rounded-r-md bg-white pt-2">
        {MEASURE_TOOLS.map(([label, icon]) => (
          <ToolButton key={label} label={label} className="h-[54px]"><Ico>{icon}</Ico></ToolButton>
        ))}
      </div>
      <div className="h-[235px] shrink-0 rounded-r-md bg-white pt-2">
        {LOCK_TOOLS.map(([label, icon]) => (
          <ToolButton key={label} label={label} className="h-[54px]"><Ico>{icon}</Ico></ToolButton>
        ))}
        <button aria-label="Hide All Drawings" className="ml-[17px] mt-[5px] flex h-[45px] w-[45px] items-center justify-center rounded-md bg-[#2196f3] text-white">
          <Ico w={32} h={30}><path d="M2 15q14 -18 28 0q-14 18 -28 0zM27 5L5 25" /><circle cx="16" cy="15" r="5" /></Ico>
        </button>
      </div>
      <div className="flex flex-1 justify-center overflow-hidden bg-[#b2b5be] text-[#7a7d86]">
        <Ico w={32} h={40}><path d="M5 17h22M7 17v22h18v-22M12 20v18M16 20v18M20 20v18" /><path stroke="#fff" strokeWidth="3" d="M4 10l12 9l12 -9" /></Ico>
      </div>
      <button aria-label="Hide toolbar" className="absolute left-[69px] top-[797px] z-10 flex h-10 w-[13px] items-center justify-center rounded-md border border-[#dfe1ea] bg-white text-[#9598a1]">
        <Ico w={6} h={10} sw={1}><path d="M5 1l-4 4l4 4" /></Ico>
      </button>
    </aside>
  );
}

const cell = "flex w-[59px] shrink-0 items-center justify-center border-r-2 border-[#e0e3eb]";

function TopToolbar() {
  return (
    <div className="flex h-[59px] shrink-0 border-b-2 border-[#e0e3eb] bg-white text-[20px] text-[#131722]">
      <div className="flex w-[152px] shrink-0 items-center border-r-2 border-[#e0e3eb]">
        <input aria-label="Symbol" defaultValue="DXY" className="w-full bg-transparent pl-[18px] font-bold text-[#4a4a4a] outline-none" />
      </div>
      <div className="flex w-[310px] shrink-0 items-center justify-between border-r-2 border-[#e0e3eb] pl-[12px] pr-1">
        {["1m", "5m", "15m", "1h", "4h", "D"].map((t) => (
          <button key={t} className={t === "4h" ? "text-[#2196f3]" : ""}>{t}</button>
        ))}
        <button aria-label="Intervals" className="px-1"><Chevron /></button>
      </div>
      <button aria-label="Candles" className={cell}><Ico w={24} h={34}><path d="M3 7h6v20h-6zM6 1v6M6 27v6M15 11h6v12h-6zM18 6v5M18 23v5" /></Ico></button>
      <button aria-label="Compare" className={cell}><Ico w={30} h={30}><circle cx="15" cy="15" r="13" /><path d="M15 9v12M9 15h12" /></Ico></button>
      <button aria-label="Indicators" className={cell}><Ico w={34} h={34}><path d="M1 15q8 -16 14 -6t13 -1M26 19v12M20 25h12" /></Ico></button>
      <button aria-label="Templates" className={cell}><Ico w={34} h={34}><path d="M2 11l6 -5q3 -2 6 1t6 0l7 -6M2 19l6 -5q3 -2 6 1t6 0l7 -6M2 28v3M7 26v5M12 23v8M16 26v5M25 20v12M19 26h12" /></Ico></button>
      <button aria-label="Alert" className={cell}><Ico w={34} h={34}><path d="M18 29a12 12 0 1 1 11 -11M5 10q-3 -4 1 -7t8 1M27 10q3 -4 -1 -7t-8 1M16 9v8h-5M24 20v12M18 26h12" /></Ico></button>
      <button aria-label="Replay" className={cell}><Ico w={28} h={24}><path d="M12 3v18l-9 -9zM24 3v18l-9 -9z" /></Ico></button>
      <div className="flex w-[91px] shrink-0 items-center justify-between border-r-2 border-[#e0e3eb] px-3">
        <button aria-label="Undo"><Ico w={22} h={22}><path d="M7 2l-5 5l5 5M2 7h9q8 0 8 10" /></Ico></button>
        <button aria-label="Redo" className="text-[#c3c5cb]"><Ico w={22} h={22}><path d="M15 2l5 5l-5 5M20 7h-9q-8 0 -8 10" /></Ico></button>
      </div>
      <div className="flex-1 border-r-2 border-[#e0e3eb]" />
      <button aria-label="Select layout" className={cell}><Ico w={28} h={28}><rect x="1" y="2" width="26" height="24" rx="2" /></Ico></button>
      <button className="flex w-[230px] shrink-0 items-center border-r-2 border-[#e0e3eb] pl-[10px]">
        <Ico w={36} h={26} className="mr-[7px]"><path strokeDasharray="5 3" d="M7 23q-5 -1 -5 -6t6 -6q3 -8 11 -8t10 8q5 1 5 6t-5 6z" /></Ico>
        baba prima vie
        <Chevron className="ml-[17px]" />
      </button>
      <button aria-label="Settings" className={cell}>
        <Ico w={32} h={32}><path d="M14 2h4l1 4l3 1l4 -2l3 3l-2 4l1 3l3 1v3l-3 1l-1 3l2 4l-3 3l-4 -2l-3 1l-1 3h-4l-1 -3l-3 -1l-4 2l-3 -3l2 -4l-1 -3l-3 -1v-3l3 -1l1 -3l-2 -4l3 -3l4 2l3 -1z" /><circle cx="16" cy="17" r="4" /></Ico>
      </button>
      <button aria-label="Fullscreen" className={cell}><Ico w={28} h={28}><path d="M3 10v-7h7M18 3h7v7M25 18v7h-7M10 25h-7v-7M3 3l8 8M25 3l-8 8M25 25l-8 -8M3 25l8 -8" /></Ico></button>
      <button aria-label="Snapshot" className="flex w-[57px] shrink-0 items-center justify-center"><Ico w={34} h={30}><path d="M4 6h6l2 -4h10l2 4h6q2 0 2 2v17q0 2 -2 2h-26q-2 0 -2 -2v-17q0 -2 2 -2z" /><circle cx="17" cy="15" r="6" /></Ico></button>
      <button className="w-[125px] shrink-0 bg-[#2196f3] text-[22px] text-white">Publish</button>
      <button aria-label="Play" className="flex w-[58px] shrink-0 items-center justify-center border-l border-white bg-[#2196f3] text-white">
        <Ico w={34} h={34}><circle cx="17" cy="17" r="15" /><path fill="#fff" stroke="none" d="M13 10l9 7l-9 7z" /></Ico>
      </button>
    </div>
  );
}

function LegendButton({ label, children }) {
  return (
    <button aria-label={label} className="flex h-[21px] w-[21px] items-center justify-center rounded-sm bg-[#bcbec8] text-white">
      <svg width="17" height="17" viewBox="0 0 17 17" fill="none" stroke="currentColor" strokeWidth="2">{children}</svg>
    </button>
  );
}

function Legend() {
  return (
    <div className="absolute left-[18px] top-[10px] text-[#555]">
      <div className="flex h-8 items-center whitespace-nowrap text-[25px] leading-8">
        <button aria-label="Collapse"><Ico w={20} h={20}><rect x="1" y="1" width="18" height="18" rx="2" /><path d="M4 10h12" /></Ico></button>
        <svg width="18" height="20" viewBox="0 0 18 20" className="ml-[15px] mr-[6px]"><path d="M0 0h18l-5 10l5 10h-18z" fill="#bcbec8" /></svg>
        <span className="w-[438px]">U.S. Dollar Currency Index <span className="text-[#bbb]">·</span> 240 <span className="text-[#bbb]">·</span> TVC</span>
        <Chevron className="text-black" />
        <div className="ml-[43px] flex text-[#eb4d5c]">
          <span className="w-[101px]"><span className="text-[#555]">O</span>97.33</span>
          <span className="w-[99px]"><span className="text-[#555]">H</span>97.34</span>
          <span className="w-[95px]"><span className="text-[#555]">L</span>97.27</span>
          <span className="w-[97px]"><span className="text-[#555]">C</span>97.30</span>
          <span>−0.03 (−0.03%)</span>
        </div>
      </div>
      <div className="mt-[13px] flex h-[21px] items-center gap-1">
        <span className="w-[130px] whitespace-nowrap text-[19px] leading-5">Sam Fucker v5</span>
        <Chevron className="mr-[13px] text-[#400000]" />
        <LegendButton label="Hide"><circle cx="8" cy="8" r="6" /><circle cx="8" cy="8" r="1" /></LegendButton>
        <LegendButton label="Format"><circle cx="8" cy="8" r="4" /><path d="M8 1v3M8 12v3M1 8h3M12 8h3M3 3l2 2M11 11l2 2M3 13l2 -2M11 5l2 -2" /></LegendButton>
        <LegendButton label="Source"><path d="M7 2q-3 0 -3 3q0 3 -2 3q2 0 2 3q0 3 3 3M10 2q3 0 3 3q0 3 2 3q-2 0 -2 3q0 3 -3 3" /></LegendButton>
        <LegendButton label="Remove"><path strokeWidth="3" d="M3 3l11 11M14 3l-11 11" /></LegendButton>
      </div>
    </div>
  );
}

function OrderTag({ qty, className }) {
  return (
    <div className={`absolute right-[82px] flex h-[31px] border-2 border-[#6aaaec] bg-white font-['Liberation_Serif',serif] text-[14px] font-bold leading-4 text-[#4094e8] ${className}`}>
      <span className="my-auto ml-1 h-[17px] w-[3px] bg-[repeating-linear-gradient(#4094e8_0_1px,transparent_1px_3px)]" />
      <span className="flex w-[98px] items-center justify-center">BUY LIMIT</span>
      <span className="flex w-[38px] items-center justify-center bg-[#4094e8] text-white">{qty}</span>
      <button aria-label="Cancel order" className="flex w-[28px] items-center justify-center"><Ico w={14} h={14} sw={1}><path d="M1 1l12 12M13 1L1 13" /></Ico></button>
    </div>
  );
}

function Chart() {
  return (
    <div className="flex min-h-0 flex-1 flex-col bg-white">
      <div className="flex min-h-0 flex-1">
        <div className="relative min-w-0 flex-1 overflow-hidden">
          <Plot />
          <Legend />
          <svg width="24" height="24" viewBox="0 0 24 24" className="absolute right-[9px] top-[15px]" fill="none" stroke="#f7934c" strokeWidth="2"><circle cx="12" cy="12" r="11" /><path d="M12 6v8M12 16v2" /></svg>
          <svg width="21" height="21" viewBox="0 0 21 21" className="absolute right-[17px] top-[55px]"><rect width="21" height="21" rx="2" fill="#2196f3" /><path d="M5 3h11l-5 6zM5 18h11l-5 -6z" fill="#fff" /></svg>
          <button aria-label="Add" className="absolute right-px top-[142px] flex h-[26px] w-[24px] items-center justify-center bg-[#4c525e] text-white"><Ico w={18} h={18} sw={1}><path d="M9 1v16M1 9h16" /></Ico></button>
          <OrderTag qty="100" className="top-[350px]" />
          <OrderTag qty="400" className="top-[447px]" />
        </div>
        <PriceAxis />
      </div>
      <TimeAxis />
    </div>
  );
}

function RangeBar() {
  return (
    <div className="flex h-[59px] shrink-0 items-center rounded-b-md border-t-2 border-[#e0e3eb] bg-white pl-[25px] pr-[17px] text-[19px] text-[#131722]">
      <div className="flex w-[426px] justify-between">
        {["1D", "5D", "1M", "3M", "6M", "YTD", "1Y", "5Y", "All"].map((r) => <button key={r}>{r}</button>)}
      </div>
      <span className="ml-[25px] mr-[23px] h-8 w-[2px] bg-[#e0e3eb]" />
      <button>Go to...</button>
      <span className="flex-1" />
      <button className="text-[20px]">19:32:10 (UTC+2)</button>
      <span className="mx-[25px] h-8 w-[2px] bg-[#e0e3eb]" />
      <div className="flex gap-6">
        <button>%</button>
        <button>log</button>
        <button>auto</button>
      </div>
    </div>
  );
}

const tab = "flex shrink-0 items-center border-r-2 border-[#dfe1ea]";

function BottomTabs() {
  return (
    <div className="relative mt-[7px] flex h-[58px] shrink-0 rounded-t-md border-b-2 border-[#dfe1ea] bg-white text-[20px] text-[#131722]">
      <button className={`${tab} w-[201px] justify-between pl-6 pr-[7px]`}>Stock Screener<Chevron /></button>
      <button className={`${tab} w-[153px] justify-center`}>Text Notes</button>
      <button className={`${tab} w-[152px] justify-center`}>Pine Editor</button>
      <button className={`${tab} w-[195px] justify-center`}>Strategy Tester</button>
      <button className={`${tab} w-[196px] justify-center`}>Paper Trading<span className="ml-[7px] h-[9px] w-[9px] rounded-full bg-[#5cb860]" /></button>
      <span className="flex-1" />
      <button aria-label="Open panel" className="mr-6"><Ico w={28} h={14}><path d="M1 12l13 -10l13 10" /></Ico></button>
      <button aria-label="Maximize panel" className="mr-6"><Ico w={28} h={26}><rect x="1" y="1" width="26" height="24" rx="3" /><path d="M1 6h26" /></Ico></button>

      {/* floating trade panel */}
      <div className="absolute left-[926px] top-[-8px] flex h-16 border-2 border-[#e0e3eb] bg-white text-[20px] leading-6 text-[#4a4a4a] shadow-sm">
        <svg width="21" height="60" viewBox="0 0 21 60" fill="#ccc">
          {[24, 31, 38].map((y) => <g key={y}><rect x="5" y={y} width="3" height="3" /><rect x="11" y={y} width="3" height="3" /></g>)}
        </svg>
        <button className="flex w-[151px] flex-col items-start justify-center border-x-2 border-[#e0e3eb] bg-[#fdf0f3] pl-[9px]">
          <span className="text-[17px] font-bold text-[#f4506c]">SELL</span>97.30
        </button>
        <span className="flex w-[75px] items-center justify-center text-[#8a8a8a]">0.00</span>
        <button className="flex w-[151px] flex-col items-start justify-center border-x-2 border-[#e0e3eb] bg-[#ecf6fe] pl-[9px]">
          <span className="text-[17px] font-bold text-[#2196f3]">BUY</span>97.30
        </button>
        <input aria-label="Quantity" defaultValue="400" className="w-[47px] bg-white text-center outline-none" />
        <div className="flex w-[27px] flex-col border-l-2 border-[#e0e3eb]">
          <button aria-label="Increase" className="flex flex-1 items-center justify-center border-b-2 border-[#e0e3eb]"><Ico w={14} h={14} sw={2}><path d="M7 1v12M1 7h12" /></Ico></button>
          <button aria-label="Decrease" className="flex flex-1 items-center justify-center"><Ico w={14} h={14} sw={2}><path d="M1 7h12" /></Ico></button>
        </div>
      </div>
    </div>
  );
}

function RightToolbar() {
  return (
    <aside className="ml-2 flex w-[67px] shrink-0 flex-col gap-[2px] overflow-hidden bg-[#dfe1ea] text-[#131722]">
      <div className="h-[467px] shrink-0 bg-white">
        {RIGHT_TOP.map(([label, icon]) => (
          <ToolButton key={label} label={label} className="h-[76px]"><Ico w={46} className="overflow-visible">{icon}</Ico></ToolButton>
        ))}
      </div>
      <div className="h-[324px] shrink-0 bg-white pt-[10px]">
        {RIGHT_MID.map(([label, icon]) => (
          <ToolButton key={label} label={label} className="h-[76px]"><Ico w={46} className="overflow-visible">{icon}</Ico></ToolButton>
        ))}
      </div>
      <div className="flex h-[93px] shrink-0 items-center bg-white">
        <ToolButton label="Object Tree" className="h-[60px]">
          <Ico w={50} h={30}><path d="M2 24L16 11L29 24q-1 5 -4 4L16 18L6 28q-5 0 -4 -4zM22 5q1 -4 4 -3L35 11L45 2q4 -1 4 3L35 18z" /></Ico>
        </ToolButton>
      </div>
      <div className="flex flex-1 justify-center overflow-hidden bg-[#b2b5be] text-[#7a7d86]">
        <Ico w={46} h={44}><g><rect x="24" y="14" width="4" height="4" rx="2" /><rect x="33" y="14" width="10" height="4" rx="2" /><rect x="24" y="23" width="4" height="4" rx="2" /><rect x="33" y="23" width="10" height="4" rx="2" /><rect x="9" y="32" width="10" height="5" rx="2" /><rect x="24" y="32" width="4" height="5" rx="2" /></g><path stroke="#fff" strokeWidth="3" d="M13 12l12 11l12 -11" /></Ico>
      </div>
    </aside>
  );
}

export default function App() {
  return (
    <div className="flex h-screen flex-col overflow-hidden bg-[#dfe1ea] font-['Noto_Sans',sans-serif]">
      <BrowserBar />
      <div className="flex min-h-0 flex-1">
        <LeftToolbar />
        <main className="ml-[6px] flex min-w-0 flex-1 flex-col">
          <TopToolbar />
          <Chart />
          <RangeBar />
          <BottomTabs />
        </main>
        <RightToolbar />
      </div>
    </div>
  );
}
